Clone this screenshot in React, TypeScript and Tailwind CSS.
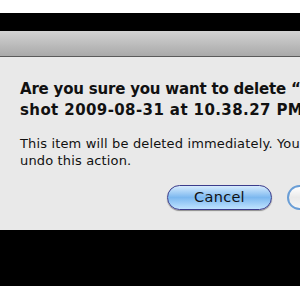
export default function App() {
  return (
    <div className="w-[300px] h-[300px] overflow-hidden bg-white flex flex-col" style={{ fontFamily: '"DejaVu Sans", Verdana, sans-serif' }}>
      <div className="h-[13px] bg-white shrink-0" />
      <div className="h-[18px] bg-black shrink-0" />
      <div className="h-[26px] shrink-0 bg-gradient-to-b from-[#d3d3d3] to-[#a9a9a9] border-b border-[#5a5a5a]" />
      <div className="h-[173px] shrink-0 bg-[#e9e9e9] pl-[20px] pt-[22px] whitespace-nowrap overflow-hidden flex flex-col">
        <div className="text-[15px] font-bold text-[#111] leading-[21px] tracking-[-0.2px]">
          <div>Are you sure you want to delete “Screen</div>
          <div className="tracking-[0.4px]">shot 2009-08-31 at 10.38.27 PM”?</div>
        </div>
        <div className="mt-[14px] text-[13px] text-[#111] leading-[17px] tracking-[0.15px]">
          <div>This item will be deleted immediately. You can’t</div>
          <div>undo this action.</div>
        </div>
        <div className="mt-[16px] flex items-center gap-[15px] pl-[147px]">
          <div className="w-[105px] h-[25px] shrink-0 rounded-full border border-[#3c3c8c] shadow-[0_1px_1px_rgba(0,0,0,0.4)] bg-gradient-to-b from-[#d6ebfd] via-[#7cb8ef] to-[#bfe3ff] flex items-center justify-center text-[14.5px] text-[#111] tracking-[0.3px]">
            Cancel
          </div>
          <div className="w-[90px] h-[25px] rounded-full border-2 border-[#6a9ed6] bg-gradient-to-b from-[#ffffff] via-[#eaeaea] to-[#f6f6f6] shrink-0" />
        </div>
      </div>
      <div className="h-[56px] bg-black shrink-0" />
      <div className="flex-1 bg-white" />
    </div>
  );
}
